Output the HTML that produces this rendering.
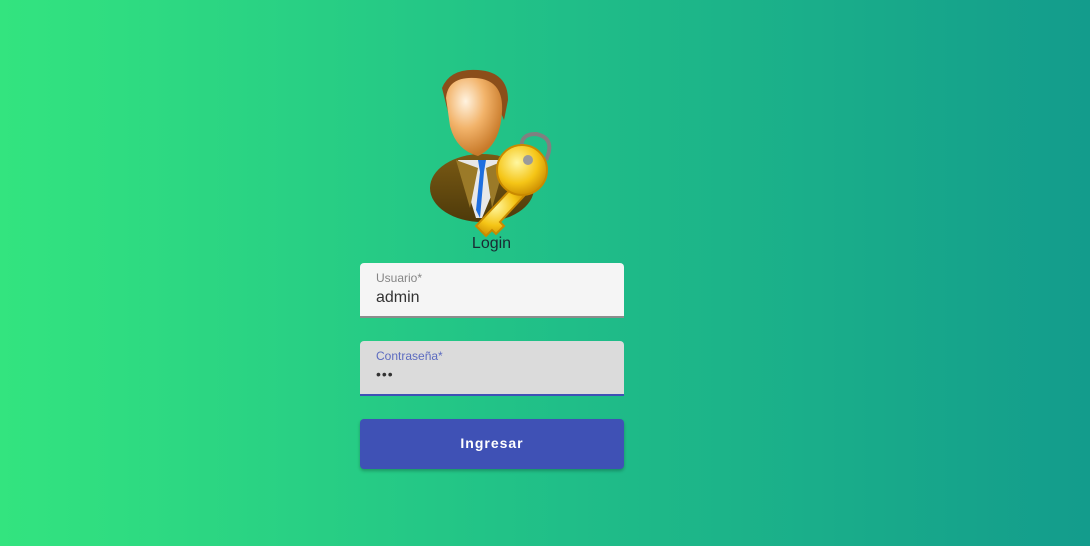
<!DOCTYPE html>
<html><head><meta charset="utf-8"><style>
html,body{margin:0;padding:0;width:1090px;height:546px;overflow:hidden}
body{background:linear-gradient(90deg,#33e47f 0%,#22c387 45%,#139c8c 100%);font-family:"Liberation Sans",sans-serif;position:relative}
.lbl{position:absolute;left:0;width:983px;text-align:center;top:235px;font-size:16px;color:#1a2a33}
.f{position:absolute;left:360px;width:264px;height:55px;border-radius:4px 4px 0 0;box-sizing:border-box}
.f1{top:263px;background:#f5f5f5;border-bottom:2px solid #8c8c8c}
.f2{top:341px;background:#dbdbdb;border-bottom:2px solid #3f51b5}
.f .l{position:absolute;left:16px;top:8px;font-size:12px;color:#858585}
.f2 .l{color:#5c6bc0}
.f .v{position:absolute;left:16px;top:26px;font-size:16px;color:#333}
.btn{position:absolute;left:360px;top:419px;width:264px;height:50px;background:#3f51b5;border-radius:4px;color:#fff;font-weight:bold;font-size:14px;letter-spacing:1px;text-align:center;line-height:48px;box-shadow:0 2px 3px rgba(0,0,0,.25)}
</style></head><body>
<svg style="position:absolute;left:420px;top:60px" width="150" height="180" viewBox="0 0 150 180">
<defs>
<radialGradient id="face" cx="0.35" cy="0.3" r="0.7"><stop offset="0" stop-color="#fff3e0"/><stop offset="0.5" stop-color="#f2b36a"/><stop offset="1" stop-color="#c87a2a"/></radialGradient>
<linearGradient id="suit" x1="0" y1="0" x2="0" y2="1"><stop offset="0" stop-color="#7a5a14"/><stop offset="1" stop-color="#4e3a0a"/></linearGradient>
<radialGradient id="key" cx="0.4" cy="0.35" r="0.7"><stop offset="0" stop-color="#fff7a0"/><stop offset="0.6" stop-color="#f5c516"/><stop offset="1" stop-color="#c98a00"/></radialGradient>
</defs>
<ellipse cx="62" cy="128" rx="52" ry="34" fill="url(#suit)"/>
<path d="M38 100 L56 158 L62 158 L86 100 Z" fill="#e8e8e8"/>
<path d="M36 100 L50 148 L58 108 Z M86 100 L72 148 L66 108 Z" fill="#9b7a28"/>
<path d="M58 100 L66 100 L64 112 L60 158 L56 150 L60 112 Z" fill="#1e6fe0"/>
<path d="M22 28 Q30 8 58 10 Q88 12 88 40 L84 60 L78 46 Q60 38 40 36 L30 60 Z" fill="#8b4e1a"/>
<path d="M26 38 Q28 16 56 18 Q84 20 82 52 Q80 86 58 96 Q36 90 30 66 Z" fill="url(#face)"/>
<path d="M104 96 Q96 74 116 74 Q136 78 126 100" fill="none" stroke="#808080" stroke-width="4"/>
<path d="M90 130 L56 166 L66 176 L72 170 L76 174 L84 166 L80 162 L104 136 Z" fill="url(#key)" stroke="#c98a00" stroke-width="2"/>
<circle cx="102" cy="110" r="25" fill="url(#key)" stroke="#c98a00" stroke-width="2"/>
<circle cx="108" cy="100" r="5" fill="#9a9a9a"/>
</svg>
<div class="lbl">Login</div>
<div class="f f1"><div class="l">Usuario*</div><div class="v">admin</div></div>
<div class="f f2"><div class="l">Contraseña*</div><div class="v" style="font-size:14px;top:25px;letter-spacing:1px">•••</div></div>
<div class="btn">Ingresar</div>
</body></html>
